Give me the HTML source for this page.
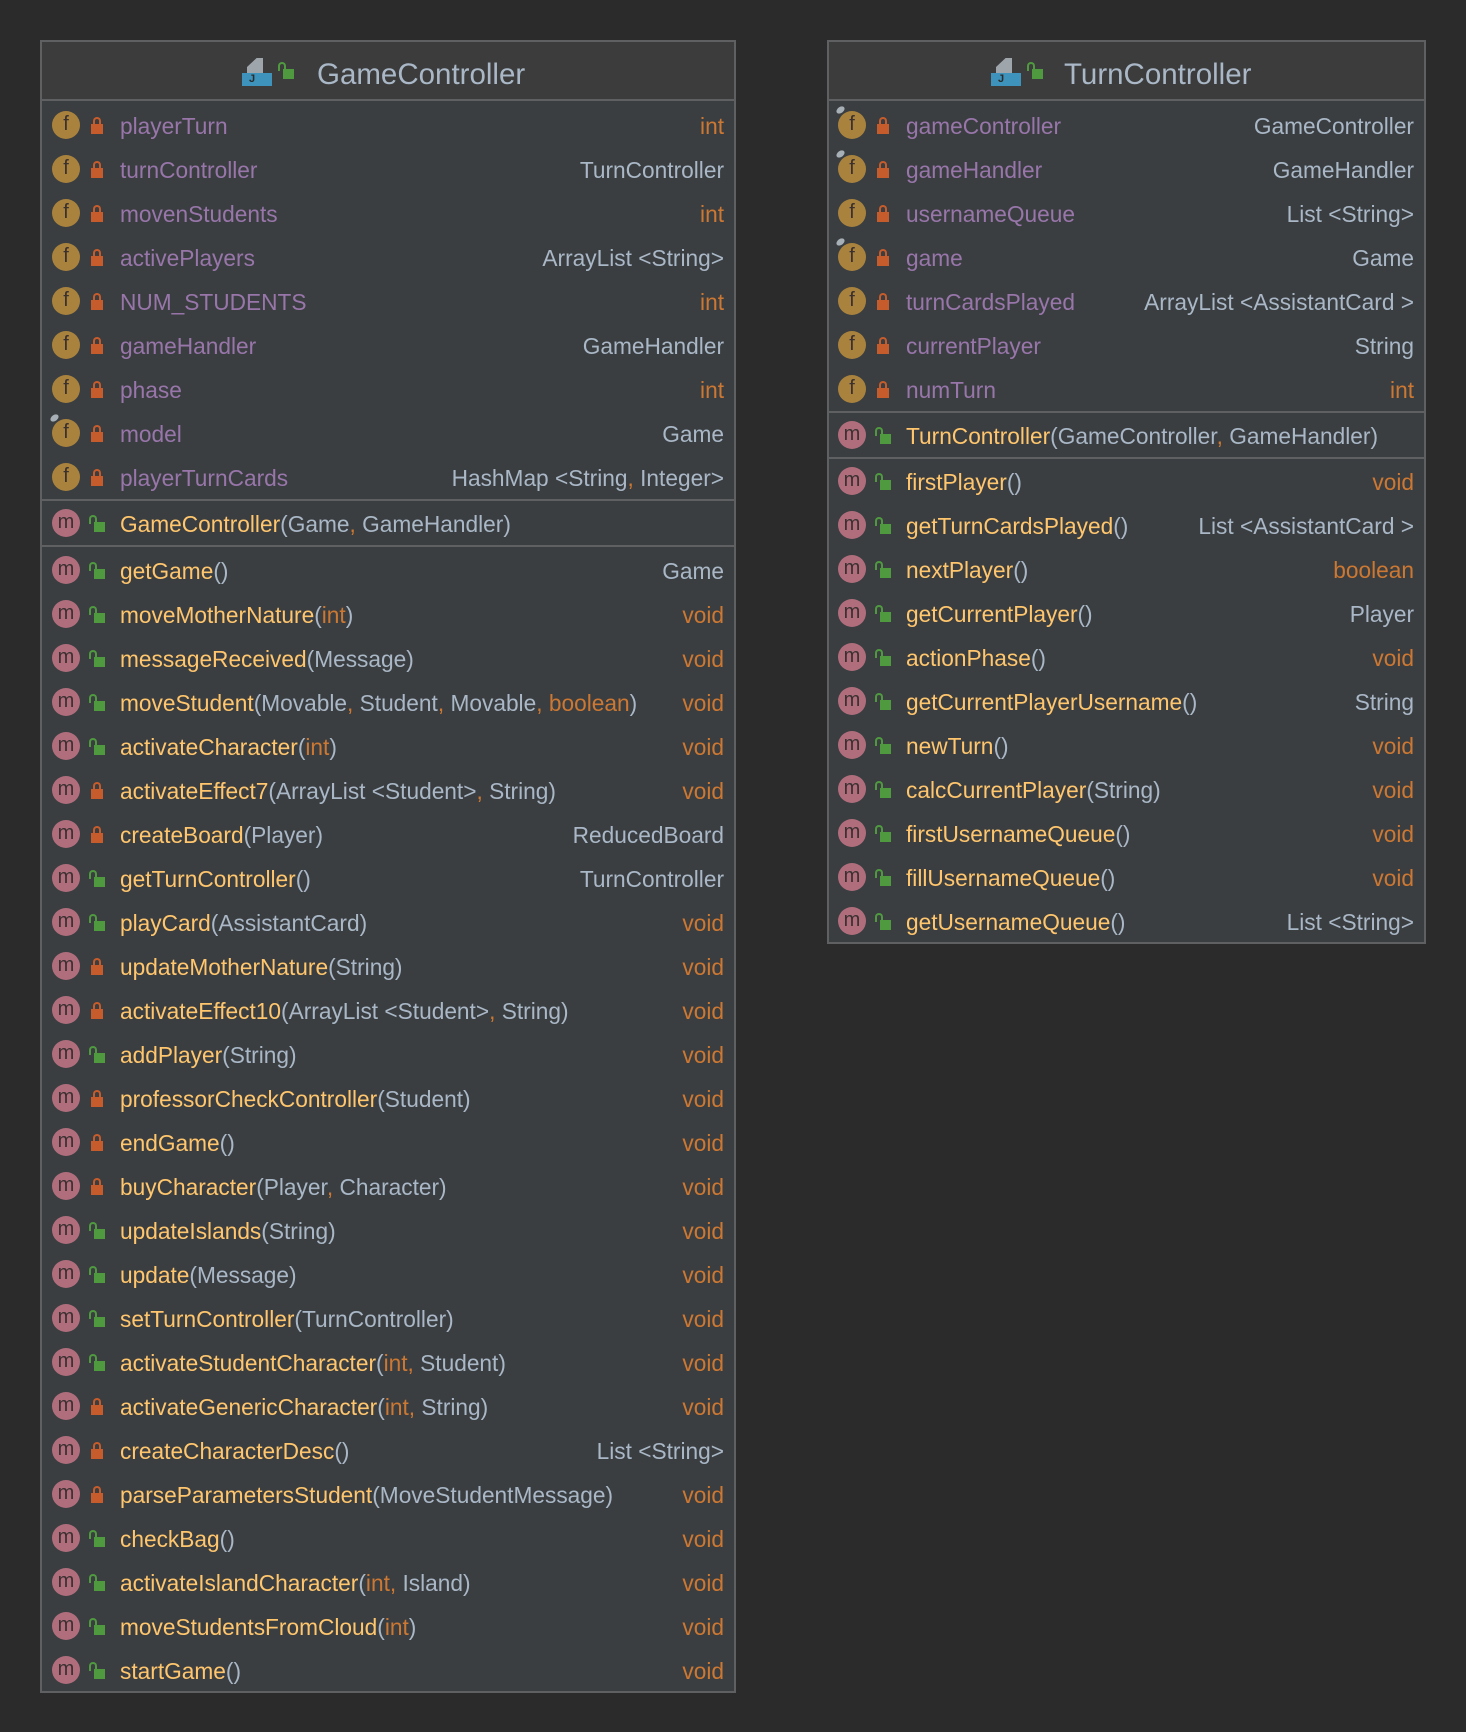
<!DOCTYPE html>
<html><head><meta charset="utf-8">
<style>
*{margin:0;padding:0;box-sizing:border-box}
body{width:1466px;height:1732px;background:#2b2b2b;position:relative;overflow:hidden;font-family:"Liberation Sans",sans-serif;font-size:22.7px;color:#a9b7c6}
.box{position:absolute;background:#3b3e41;border:2px solid #5f6061}
.hd{position:absolute;left:0;right:0;top:0;height:59px;background:#3c3c3c;border-bottom:2px solid #5f6061}
.ttl{position:absolute;top:16px;font-size:29.5px;color:#a9b7c6;white-space:nowrap}
.ci{position:absolute;width:30px;height:28px}
.ci .pg{position:absolute;left:5px;top:0;width:16px;height:15px;background:#9ea5ab;clip-path:polygon(60% 0,100% 0,100% 100%,0 100%,0 60%)}
.ci .bl{position:absolute;left:0;top:15px;width:30px;height:13px;background:#3d93bb;color:#2b2b2b;font-size:11px;font-weight:bold;padding-left:7px;line-height:13px}
.row{position:absolute;left:0;right:0;height:44px;white-space:nowrap}
.ic{position:absolute;top:8px;width:28px;height:28px;border-radius:50%;text-align:center;line-height:26px;font-size:20px;color:#3a3030}
.f{background:#a9833d}
.m{background:#b06e7d}
.pin{position:absolute;top:4px;width:9px;height:6px;border-radius:50%;background:#a7b0b6;transform:rotate(-35deg)}
.lk{position:absolute;top:14px;width:12px;height:17px}
.lk .b{position:absolute;left:0;bottom:0;width:12px;height:10px}
.lk .s{position:absolute;top:0;width:8px;height:9px;border:2px solid;border-bottom:none;border-radius:4px 4px 0 0}
.pv .b{background:#c65c2b}.pv .s{left:2px;border-color:#c65c2b}
.pb .b{background:#4f9a3f;left:3px;width:11px}.pb .s{left:-2px;border-color:#4f9a3f}
.n{position:absolute;top:10px}
.t{position:absolute;right:10px;top:10px}
.fn{color:#9876aa}
.mn{color:#ffc66d}
.o{color:#cc7832}
.dv{position:absolute;left:0;right:0;height:2px;background:#5f6061}
</style></head><body>

<div class="box" style="left:40px;top:40px;width:696px;height:1653px">
 <div class="hd">
  <div class="ci" style="left:200px;top:16px"><div class="pg"></div><div class="bl">J</div></div>
  <div class="lk pb" style="left:238px;top:20px"><div class="s"></div><div class="b"></div></div>
  <div class="ttl" style="left:275px">GameController</div>
 </div>
</div>

<div class="box" style="left:827px;top:40px;width:599px;height:904px">
 <div class="hd">
  <div class="ci" style="left:162px;top:16px"><div class="pg"></div><div class="bl">J</div></div>
  <div class="lk pb" style="left:200px;top:20px"><div class="s"></div><div class="b"></div></div>
  <div class="ttl" style="left:235px">TurnController</div>
 </div>
</div>

<div style="position:absolute;left:42px;top:0;width:692px">
<div class="row" style="top:103px"><div class="ic f" style="left:10px">f</div><div class="lk pv" style="left:49px"><div class="s"></div><div class="b"></div></div><div class="n fn" style="left:78px">playerTurn</div><div class="t o">int</div></div>
<div class="row" style="top:147px"><div class="ic f" style="left:10px">f</div><div class="lk pv" style="left:49px"><div class="s"></div><div class="b"></div></div><div class="n fn" style="left:78px">turnController</div><div class="t">TurnController</div></div>
<div class="row" style="top:191px"><div class="ic f" style="left:10px">f</div><div class="lk pv" style="left:49px"><div class="s"></div><div class="b"></div></div><div class="n fn" style="left:78px">movenStudents</div><div class="t o">int</div></div>
<div class="row" style="top:235px"><div class="ic f" style="left:10px">f</div><div class="lk pv" style="left:49px"><div class="s"></div><div class="b"></div></div><div class="n fn" style="left:78px">activePlayers</div><div class="t">ArrayList &lt;String&gt;</div></div>
<div class="row" style="top:279px"><div class="ic f" style="left:10px">f</div><div class="lk pv" style="left:49px"><div class="s"></div><div class="b"></div></div><div class="n fn" style="left:78px">NUM_STUDENTS</div><div class="t o">int</div></div>
<div class="row" style="top:323px"><div class="ic f" style="left:10px">f</div><div class="lk pv" style="left:49px"><div class="s"></div><div class="b"></div></div><div class="n fn" style="left:78px">gameHandler</div><div class="t">GameHandler</div></div>
<div class="row" style="top:367px"><div class="ic f" style="left:10px">f</div><div class="lk pv" style="left:49px"><div class="s"></div><div class="b"></div></div><div class="n fn" style="left:78px">phase</div><div class="t o">int</div></div>
<div class="row" style="top:411px"><div class="ic f" style="left:10px">f</div><div class="pin" style="left:8px"></div><div class="lk pv" style="left:49px"><div class="s"></div><div class="b"></div></div><div class="n fn" style="left:78px">model</div><div class="t">Game</div></div>
<div class="row" style="top:455px"><div class="ic f" style="left:10px">f</div><div class="lk pv" style="left:49px"><div class="s"></div><div class="b"></div></div><div class="n fn" style="left:78px">playerTurnCards</div><div class="t">HashMap &lt;String<span class="o">,</span> Integer&gt;</div></div>
<div class="dv" style="top:499px"></div>
<div class="row" style="top:501px"><div class="ic m" style="left:10px">m</div><div class="lk pb" style="left:49px"><div class="s"></div><div class="b"></div></div><div class="n" style="left:78px"><span class="mn">GameController</span>(Game<span class="o">,</span> GameHandler)</div></div>
<div class="dv" style="top:545px"></div>
</div>

<div style="position:absolute;left:42px;top:548px;width:692px">
<div class="row" style="top:0px"><div class="ic m" style="left:10px">m</div><div class="lk pb" style="left:49px"><div class="s"></div><div class="b"></div></div><div class="n" style="left:78px"><span class="mn">getGame</span>()</div><div class="t">Game</div></div>
<div class="row" style="top:44px"><div class="ic m" style="left:10px">m</div><div class="lk pb" style="left:49px"><div class="s"></div><div class="b"></div></div><div class="n" style="left:78px"><span class="mn">moveMotherNature</span>(<span class="o">int</span>)</div><div class="t o">void</div></div>
<div class="row" style="top:88px"><div class="ic m" style="left:10px">m</div><div class="lk pb" style="left:49px"><div class="s"></div><div class="b"></div></div><div class="n" style="left:78px"><span class="mn">messageReceived</span>(Message)</div><div class="t o">void</div></div>
<div class="row" style="top:132px"><div class="ic m" style="left:10px">m</div><div class="lk pb" style="left:49px"><div class="s"></div><div class="b"></div></div><div class="n" style="left:78px"><span class="mn">moveStudent</span>(Movable<span class="o">,</span> Student<span class="o">,</span> Movable<span class="o">,</span> <span class="o">boolean</span>)</div><div class="t o">void</div></div>
<div class="row" style="top:176px"><div class="ic m" style="left:10px">m</div><div class="lk pb" style="left:49px"><div class="s"></div><div class="b"></div></div><div class="n" style="left:78px"><span class="mn">activateCharacter</span>(<span class="o">int</span>)</div><div class="t o">void</div></div>
<div class="row" style="top:220px"><div class="ic m" style="left:10px">m</div><div class="lk pv" style="left:49px"><div class="s"></div><div class="b"></div></div><div class="n" style="left:78px"><span class="mn">activateEffect7</span>(ArrayList &lt;Student&gt;<span class="o">,</span> String)</div><div class="t o">void</div></div>
<div class="row" style="top:264px"><div class="ic m" style="left:10px">m</div><div class="lk pv" style="left:49px"><div class="s"></div><div class="b"></div></div><div class="n" style="left:78px"><span class="mn">createBoard</span>(Player)</div><div class="t">ReducedBoard</div></div>
<div class="row" style="top:308px"><div class="ic m" style="left:10px">m</div><div class="lk pb" style="left:49px"><div class="s"></div><div class="b"></div></div><div class="n" style="left:78px"><span class="mn">getTurnController</span>()</div><div class="t">TurnController</div></div>
<div class="row" style="top:352px"><div class="ic m" style="left:10px">m</div><div class="lk pb" style="left:49px"><div class="s"></div><div class="b"></div></div><div class="n" style="left:78px"><span class="mn">playCard</span>(AssistantCard)</div><div class="t o">void</div></div>
<div class="row" style="top:396px"><div class="ic m" style="left:10px">m</div><div class="lk pv" style="left:49px"><div class="s"></div><div class="b"></div></div><div class="n" style="left:78px"><span class="mn">updateMotherNature</span>(String)</div><div class="t o">void</div></div>
<div class="row" style="top:440px"><div class="ic m" style="left:10px">m</div><div class="lk pv" style="left:49px"><div class="s"></div><div class="b"></div></div><div class="n" style="left:78px"><span class="mn">activateEffect10</span>(ArrayList &lt;Student&gt;<span class="o">,</span> String)</div><div class="t o">void</div></div>
<div class="row" style="top:484px"><div class="ic m" style="left:10px">m</div><div class="lk pb" style="left:49px"><div class="s"></div><div class="b"></div></div><div class="n" style="left:78px"><span class="mn">addPlayer</span>(String)</div><div class="t o">void</div></div>
<div class="row" style="top:528px"><div class="ic m" style="left:10px">m</div><div class="lk pv" style="left:49px"><div class="s"></div><div class="b"></div></div><div class="n" style="left:78px"><span class="mn">professorCheckController</span>(Student)</div><div class="t o">void</div></div>
<div class="row" style="top:572px"><div class="ic m" style="left:10px">m</div><div class="lk pv" style="left:49px"><div class="s"></div><div class="b"></div></div><div class="n" style="left:78px"><span class="mn">endGame</span>()</div><div class="t o">void</div></div>
<div class="row" style="top:616px"><div class="ic m" style="left:10px">m</div><div class="lk pv" style="left:49px"><div class="s"></div><div class="b"></div></div><div class="n" style="left:78px"><span class="mn">buyCharacter</span>(Player<span class="o">,</span> Character)</div><div class="t o">void</div></div>
<div class="row" style="top:660px"><div class="ic m" style="left:10px">m</div><div class="lk pb" style="left:49px"><div class="s"></div><div class="b"></div></div><div class="n" style="left:78px"><span class="mn">updateIslands</span>(String)</div><div class="t o">void</div></div>
<div class="row" style="top:704px"><div class="ic m" style="left:10px">m</div><div class="lk pb" style="left:49px"><div class="s"></div><div class="b"></div></div><div class="n" style="left:78px"><span class="mn">update</span>(Message)</div><div class="t o">void</div></div>
<div class="row" style="top:748px"><div class="ic m" style="left:10px">m</div><div class="lk pb" style="left:49px"><div class="s"></div><div class="b"></div></div><div class="n" style="left:78px"><span class="mn">setTurnController</span>(TurnController)</div><div class="t o">void</div></div>
<div class="row" style="top:792px"><div class="ic m" style="left:10px">m</div><div class="lk pb" style="left:49px"><div class="s"></div><div class="b"></div></div><div class="n" style="left:78px"><span class="mn">activateStudentCharacter</span>(<span class="o">int,</span> Student)</div><div class="t o">void</div></div>
<div class="row" style="top:836px"><div class="ic m" style="left:10px">m</div><div class="lk pv" style="left:49px"><div class="s"></div><div class="b"></div></div><div class="n" style="left:78px"><span class="mn">activateGenericCharacter</span>(<span class="o">int,</span> String)</div><div class="t o">void</div></div>
<div class="row" style="top:880px"><div class="ic m" style="left:10px">m</div><div class="lk pv" style="left:49px"><div class="s"></div><div class="b"></div></div><div class="n" style="left:78px"><span class="mn">createCharacterDesc</span>()</div><div class="t">List &lt;String&gt;</div></div>
<div class="row" style="top:924px"><div class="ic m" style="left:10px">m</div><div class="lk pv" style="left:49px"><div class="s"></div><div class="b"></div></div><div class="n" style="left:78px"><span class="mn">parseParametersStudent</span>(MoveStudentMessage)</div><div class="t o">void</div></div>
<div class="row" style="top:968px"><div class="ic m" style="left:10px">m</div><div class="lk pb" style="left:49px"><div class="s"></div><div class="b"></div></div><div class="n" style="left:78px"><span class="mn">checkBag</span>()</div><div class="t o">void</div></div>
<div class="row" style="top:1012px"><div class="ic m" style="left:10px">m</div><div class="lk pb" style="left:49px"><div class="s"></div><div class="b"></div></div><div class="n" style="left:78px"><span class="mn">activateIslandCharacter</span>(<span class="o">int,</span> Island)</div><div class="t o">void</div></div>
<div class="row" style="top:1056px"><div class="ic m" style="left:10px">m</div><div class="lk pb" style="left:49px"><div class="s"></div><div class="b"></div></div><div class="n" style="left:78px"><span class="mn">moveStudentsFromCloud</span>(<span class="o">int</span>)</div><div class="t o">void</div></div>
<div class="row" style="top:1100px"><div class="ic m" style="left:10px">m</div><div class="lk pb" style="left:49px"><div class="s"></div><div class="b"></div></div><div class="n" style="left:78px"><span class="mn">startGame</span>()</div><div class="t o">void</div></div>
</div>

<div style="position:absolute;left:829px;top:0;width:595px">
<div class="row" style="top:103px"><div class="ic f" style="left:9px">f</div><div class="pin" style="left:7px"></div><div class="lk pv" style="left:48px"><div class="s"></div><div class="b"></div></div><div class="n fn" style="left:77px">gameController</div><div class="t">GameController</div></div>
<div class="row" style="top:147px"><div class="ic f" style="left:9px">f</div><div class="pin" style="left:7px"></div><div class="lk pv" style="left:48px"><div class="s"></div><div class="b"></div></div><div class="n fn" style="left:77px">gameHandler</div><div class="t">GameHandler</div></div>
<div class="row" style="top:191px"><div class="ic f" style="left:9px">f</div><div class="lk pv" style="left:48px"><div class="s"></div><div class="b"></div></div><div class="n fn" style="left:77px">usernameQueue</div><div class="t">List &lt;String&gt;</div></div>
<div class="row" style="top:235px"><div class="ic f" style="left:9px">f</div><div class="pin" style="left:7px"></div><div class="lk pv" style="left:48px"><div class="s"></div><div class="b"></div></div><div class="n fn" style="left:77px">game</div><div class="t">Game</div></div>
<div class="row" style="top:279px"><div class="ic f" style="left:9px">f</div><div class="lk pv" style="left:48px"><div class="s"></div><div class="b"></div></div><div class="n fn" style="left:77px">turnCardsPlayed</div><div class="t">ArrayList &lt;AssistantCard &gt;</div></div>
<div class="row" style="top:323px"><div class="ic f" style="left:9px">f</div><div class="lk pv" style="left:48px"><div class="s"></div><div class="b"></div></div><div class="n fn" style="left:77px">currentPlayer</div><div class="t">String</div></div>
<div class="row" style="top:367px"><div class="ic f" style="left:9px">f</div><div class="lk pv" style="left:48px"><div class="s"></div><div class="b"></div></div><div class="n fn" style="left:77px">numTurn</div><div class="t o">int</div></div>
<div class="dv" style="top:411px"></div>
<div class="row" style="top:413px"><div class="ic m" style="left:9px">m</div><div class="lk pb" style="left:48px"><div class="s"></div><div class="b"></div></div><div class="n" style="left:77px"><span class="mn">TurnController</span>(GameController<span class="o">,</span> GameHandler)</div></div>
<div class="dv" style="top:457px"></div>
<div class="row" style="top:459px"><div class="ic m" style="left:9px">m</div><div class="lk pb" style="left:48px"><div class="s"></div><div class="b"></div></div><div class="n" style="left:77px"><span class="mn">firstPlayer</span>()</div><div class="t o">void</div></div>
<div class="row" style="top:503px"><div class="ic m" style="left:9px">m</div><div class="lk pb" style="left:48px"><div class="s"></div><div class="b"></div></div><div class="n" style="left:77px"><span class="mn">getTurnCardsPlayed</span>()</div><div class="t">List &lt;AssistantCard &gt;</div></div>
<div class="row" style="top:547px"><div class="ic m" style="left:9px">m</div><div class="lk pb" style="left:48px"><div class="s"></div><div class="b"></div></div><div class="n" style="left:77px"><span class="mn">nextPlayer</span>()</div><div class="t o">boolean</div></div>
<div class="row" style="top:591px"><div class="ic m" style="left:9px">m</div><div class="lk pb" style="left:48px"><div class="s"></div><div class="b"></div></div><div class="n" style="left:77px"><span class="mn">getCurrentPlayer</span>()</div><div class="t">Player</div></div>
<div class="row" style="top:635px"><div class="ic m" style="left:9px">m</div><div class="lk pb" style="left:48px"><div class="s"></div><div class="b"></div></div><div class="n" style="left:77px"><span class="mn">actionPhase</span>()</div><div class="t o">void</div></div>
<div class="row" style="top:679px"><div class="ic m" style="left:9px">m</div><div class="lk pb" style="left:48px"><div class="s"></div><div class="b"></div></div><div class="n" style="left:77px"><span class="mn">getCurrentPlayerUsername</span>()</div><div class="t">String</div></div>
<div class="row" style="top:723px"><div class="ic m" style="left:9px">m</div><div class="lk pb" style="left:48px"><div class="s"></div><div class="b"></div></div><div class="n" style="left:77px"><span class="mn">newTurn</span>()</div><div class="t o">void</div></div>
<div class="row" style="top:767px"><div class="ic m" style="left:9px">m</div><div class="lk pb" style="left:48px"><div class="s"></div><div class="b"></div></div><div class="n" style="left:77px"><span class="mn">calcCurrentPlayer</span>(String)</div><div class="t o">void</div></div>
<div class="row" style="top:811px"><div class="ic m" style="left:9px">m</div><div class="lk pb" style="left:48px"><div class="s"></div><div class="b"></div></div><div class="n" style="left:77px"><span class="mn">firstUsernameQueue</span>()</div><div class="t o">void</div></div>
<div class="row" style="top:855px"><div class="ic m" style="left:9px">m</div><div class="lk pb" style="left:48px"><div class="s"></div><div class="b"></div></div><div class="n" style="left:77px"><span class="mn">fillUsernameQueue</span>()</div><div class="t o">void</div></div>
<div class="row" style="top:899px;height:43px"><div class="ic m" style="left:9px">m</div><div class="lk pb" style="left:48px"><div class="s"></div><div class="b"></div></div><div class="n" style="left:77px"><span class="mn">getUsernameQueue</span>()</div><div class="t">List &lt;String&gt;</div></div>
</div>

</body></html>
